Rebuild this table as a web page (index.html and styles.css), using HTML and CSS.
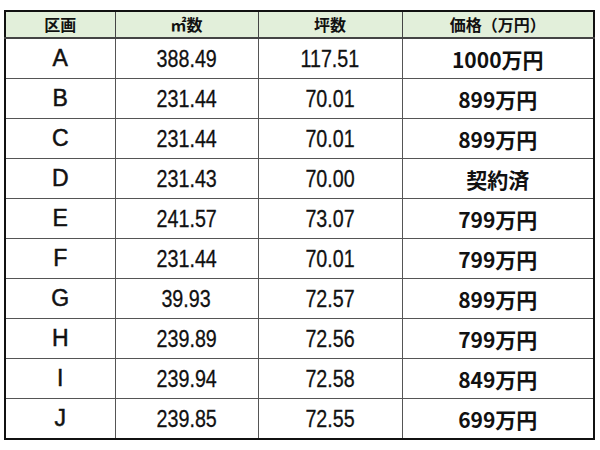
FILE: index.html
```html
<!DOCTYPE html>
<html lang="ja">
<head>
<meta charset="utf-8">
<link rel="stylesheet" href="styles.css">
</head>
<body>
<div class="wrap">
<table class="price-table">
  <colgroup>
    <col class="c1"><col class="c2"><col class="c3"><col class="c4">
  </colgroup>
  <thead>
    <tr><th>区画</th><th>㎡数</th><th>坪数</th><th>価格（万円）</th></tr>
  </thead>
  <tbody>
    <tr><td class="lot">A</td><td class="num"><span>388.49</span></td><td class="num"><span>117.51</span></td><td class="price">1000万円</td></tr>
    <tr><td class="lot">B</td><td class="num"><span>231.44</span></td><td class="num"><span>70.01</span></td><td class="price">899万円</td></tr>
    <tr><td class="lot">C</td><td class="num"><span>231.44</span></td><td class="num"><span>70.01</span></td><td class="price">899万円</td></tr>
    <tr><td class="lot">D</td><td class="num"><span>231.43</span></td><td class="num"><span>70.00</span></td><td class="price">契約済</td></tr>
    <tr><td class="lot">E</td><td class="num"><span>241.57</span></td><td class="num"><span>73.07</span></td><td class="price">799万円</td></tr>
    <tr><td class="lot">F</td><td class="num"><span>231.44</span></td><td class="num"><span>70.01</span></td><td class="price">799万円</td></tr>
    <tr><td class="lot">G</td><td class="num"><span>39.93</span></td><td class="num"><span>72.57</span></td><td class="price">899万円</td></tr>
    <tr><td class="lot">H</td><td class="num"><span>239.89</span></td><td class="num"><span>72.56</span></td><td class="price">799万円</td></tr>
    <tr><td class="lot">I</td><td class="num"><span>239.94</span></td><td class="num"><span>72.58</span></td><td class="price">849万円</td></tr>
    <tr><td class="lot">J</td><td class="num"><span>239.85</span></td><td class="num"><span>72.55</span></td><td class="price">699万円</td></tr>
  </tbody>
</table>
</div>
</body>
</html>
```
FILE: styles.css
```css
html, body {
  margin: 0;
  padding: 0;
  background: #ffffff;
}
.wrap {
  padding: 10px 0 0 4px;
}
.price-table {
  border-collapse: collapse;
  width: 589px;
  table-layout: fixed;
  border: 2px solid #111;
  color: #111;
}
.c1 { width: 110px; }
.c2 { width: 143px; }
.c3 { width: 144px; }
.c4 { width: 192px; }
.price-table th {
  background: #e2efda;
  height: 25px;
  padding: 0;
  font-family: "Noto Sans CJK JP", sans-serif;
  font-weight: 700;
  font-size: 16px;
  line-height: 25px;
  border: 1px solid #444;
  border-bottom: 2px solid #444;
  text-align: center;
}
.price-table td {
  height: 39px;
  padding: 0;
  border: 1px solid #555;
  text-align: center;
  vertical-align: middle;
}
.price-table td.lot {
  font-family: "Liberation Sans", Arial, sans-serif;
  font-size: 23px;
  font-weight: 400;
  -webkit-text-stroke: 0.5px #111;
}
.price-table td.num {
  font-family: "Liberation Sans", Arial, sans-serif;
  font-size: 24px;
  -webkit-text-stroke: 0.3px #111;
}
.price-table td.num span {
  display: inline-block;
  transform: scaleX(0.82);
}
.price-table td.price {
  font-family: "Noto Sans CJK JP", sans-serif;
  font-weight: 700;
  font-size: 21px;
}
```
